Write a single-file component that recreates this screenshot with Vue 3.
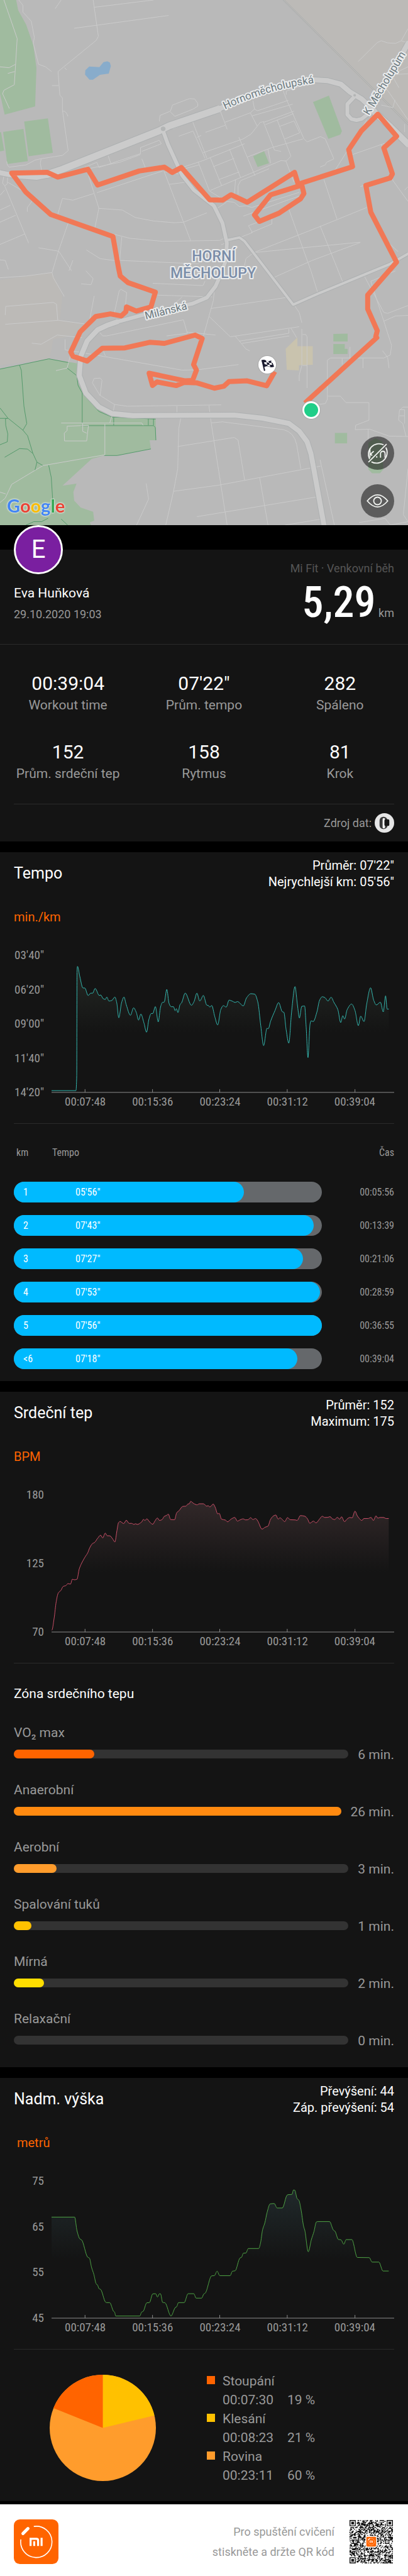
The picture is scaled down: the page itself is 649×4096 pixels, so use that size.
<template>
  <main class="report">
    <!-- Map with the route -->
    <section class="map" aria-label="Mapa trasy">
      <svg class="map-layer" viewBox="0 0 1568 3025" preserveAspectRatio="none" aria-hidden="true">
        <polygon class="block" points="1087,0 1568,0 1568,720 1440,540" />
        <polygon class="block" points="0,1614 200,1569 240,1704 230,1844 320,1869 280,1934 205,1954 190,2069 0,2104" />
        <polygon v-for="p in parks" :key="p" class="park" :points="p" />
        <polygon class="water" points="327,430 328,405 343,383 382,387 398,358 412,353 422,360 426,380 418,424 384,431 357,459 344,459" />
        <polygon class="school" points="1098,2009 1143,1944 1143,1994 1202,1994 1202,2101 1149,2104 1149,2134 1102,2130" />
        <path class="rail" d="M1087,0 L1568,720 M1093,0 L1568,708" />
        <path v-for="d in paths" :key="d" class="footpath" :d="d" />
        <path v-for="d in streets" :key="d" class="street" :d="d" />
        <path v-for="r in roads" :key="'c' + r.d" class="casing" :stroke-width="r.w + 2" :d="r.d" />
        <path v-for="r in roads" :key="r.d" class="road" :stroke-width="r.w" :d="r.d" />
        <ellipse class="island" cx="627" cy="742" rx="9" ry="13" />
        <ellipse class="island" cx="1363" cy="549" rx="5" ry="7" />
        <path class="route" :d="route" />
      </svg>

      <svg class="map-layer" viewBox="0 0 649 835" role="img" aria-label="Horní Měcholupy">
        <path id="street-curve" d="M358 174 Q426 142 500 132 L540 129" />
        <text class="street-name"><textPath href="#street-curve">Hornoměcholupská</textPath></text>
        <text class="street-name" transform="translate(587 184) rotate(-59)">K Měcholupům</text>
        <text class="street-name" transform="translate(232 508) rotate(-14)">Milánská</text>
        <text class="district" x="340" y="415">HORNÍ</text>
        <text class="district" x="339" y="442">MĚCHOLUPY</text>
        <text class="google" x="11" y="815"><tspan fill="#4285f4">G</tspan><tspan fill="#ea4335">o</tspan><tspan fill="#fbbc05">o</tspan><tspan fill="#4285f4">g</tspan><tspan fill="#34a853">l</tspan><tspan fill="#ea4335">e</tspan></text>

        <!-- start / finish -->
        <circle cx="495" cy="652" r="15" fill="#a6a6a6" />
        <circle cx="495" cy="652" r="14" fill="#fff" />
        <circle cx="495" cy="652" r="11" fill="#20ce88" />
        <circle cx="425" cy="580" r="15" fill="#a6a6a6" />
        <circle cx="425" cy="580" r="14" fill="#fff" />
        <g transform="translate(425 580)">
          <path d="M-9 -7 L-8 -8 L-3 9 L-5 10 Z" fill="#1b1b2f" />
          <path d="M-9 -7 Q-6 -9 -2 -7 T7 -7 L11 3 Q7 5 3 3 T-5 4 Z" fill="#1b1b2f" />
          <path d="M-2 -7 L2 -6 L3 -3 L-1 -4 Z M-5 -4 L-1 -4 L0 0 L-4 -1 Z M3 -3 L7 -3 L8 0 L4 0 Z M0 0 L4 0 L5 3 L1 2 Z M6 -7 L8 -6 L9 -3 L7 -3 Z" fill="#fff" />
        </g>
      </svg>

      <div class="map-buttons">
        <button type="button" class="round-btn" :aria-pressed="!showKm" aria-label="Skrýt kilometry" @click="showKm = !showKm">
          <svg viewBox="0 0 88 88" aria-hidden="true">
            <g fill="none" stroke="#f2f4f1" stroke-width="3">
              <path d="M60 22 A28 28 0 0 0 23 60" />
              <path d="M66 29 A28 28 0 0 1 28 67" />
              <path d="M68 20 L20 68" />
              <path d="M24 32 V56 M34 39 L25 47 L30 50" />
              <path d="M52 56 V44 Q54 39 58 39 Q64 39 64 46 V56 M42 52 V56" />
            </g>
          </svg>
        </button>
        <button type="button" class="round-btn" :aria-pressed="!showMap" aria-label="Skrýt mapu" @click="showMap = !showMap">
          <svg viewBox="0 0 88 88" aria-hidden="true">
            <g fill="none" stroke="#f2f4f1" stroke-width="3">
              <path d="M17 44 Q44 12 71 44 Q44 76 17 44 Z" />
              <circle cx="44" cy="44" r="10" />
            </g>
          </svg>
        </button>
      </div>
    </section>

    <!-- Profile and totals -->
    <section class="panel summary">
      <div class="profile">
        <div>
          <div class="avatar">E</div>
          <p class="name">Eva Huňková</p>
          <p class="date">29.10.2020 19:03</p>
        </div>
        <div class="total">
          <p class="source-app">Mi Fit · Venkovní běh</p>
          <p class="distance"><strong>5,29</strong> <span>km</span></p>
        </div>
      </div>
      <dl class="stats">
        <div v-for="s in stats" :key="s.label" class="stat">
          <dd>{{ s.value }}</dd>
          <dt>{{ s.label }}</dt>
        </div>
      </dl>
      <div class="data-source">
        <span>Zdroj dat:</span>
        <svg viewBox="0 0 32 32" aria-hidden="true">
          <circle cx="16" cy="16" r="16" fill="#e6e6e6" />
          <rect x="8" y="6" width="13" height="20" rx="6" fill="#3a3a3a" />
          <rect x="13" y="8" width="4" height="17" rx="2" fill="#f5f5f5" />
          <rect x="16" y="10" width="8" height="11" rx="2" fill="#161616" />
        </svg>
      </div>
    </section>

    <!-- Charts -->
    <section v-for="c in charts" :key="c.id" class="panel">
      <header class="panel-head">
        <h2>{{ c.title }}</h2>
        <p>{{ c.info[0] }}<br />{{ c.info[1] }}</p>
      </header>
      <p class="unit">{{ c.unit }}</p>
      <div class="chart">
        <ul class="y-axis">
          <li v-for="y in c.yLabels" :key="y">{{ y }}</li>
        </ul>
        <svg class="plot" :viewBox="`199 ${c.axis - c.span} 1320 ${c.span}`" preserveAspectRatio="none" aria-hidden="true">
          <defs>
            <linearGradient :id="c.id + '-fill'" gradientUnits="userSpaceOnUse" x1="0" x2="0" :y1="c.top" :y2="c.fade">
              <stop offset="0" :stop-color="c.fill" />
              <stop offset="1" stop-color="#141414" />
            </linearGradient>
          </defs>
          <path :d="`${curve(c.points)} V${c.axis} H${c.points[0][0]} Z`" :fill="`url(#${c.id}-fill)`" />
          <path class="axis" :d="`M199,${c.axis} H1519 ${ticks(c.axis)}`" />
          <path class="line" :d="curve(c.points)" :stroke="c.color" />
        </svg>
        <ul class="x-axis">
          <li v-for="t in times" :key="t">{{ t }}</li>
        </ul>
      </div>

      <table v-if="c.id === 'pace'" class="splits">
        <thead>
          <tr>
            <th scope="col">km</th>
            <th scope="col">Tempo</th>
            <th scope="col">Čas</th>
          </tr>
        </thead>
        <tbody>
          <tr v-for="s in splits" :key="s.km">
            <td>
              <span class="split-bar"><span :style="{ width: s.width + '%' }"></span></span>
              <span class="split-km">{{ s.km }}</span>
            </td>
            <td>{{ s.pace }}</td>
            <td>{{ s.time }}</td>
          </tr>
        </tbody>
      </table>

      <div v-if="c.id === 'heart'" class="zones">
        <h3>Zóna srdečního tepu</h3>
        <div v-for="z in zones" :key="z.name" class="zone">
          <p>{{ z.name }}</p>
          <div class="zone-row">
            <div class="zone-bar"><span :style="{ width: z.width + '%', backgroundColor: z.color }"></span></div>
            <span>{{ z.minutes }} min.</span>
          </div>
        </div>
      </div>

      <div v-if="c.id === 'altitude'" class="slopes">
        <svg class="pie" viewBox="0 0 170 170" aria-hidden="true">
          <circle cx="85" cy="85" r="85" fill="#ff9c2c" />
          <path d="M85 85 V0 A85 85 0 0 1 167.6 65.2 Z" fill="#ffc100" />
          <path d="M85 85 L6.1 53.2 A85 85 0 0 1 85 0 Z" fill="#ff6400" />
        </svg>
        <ul class="legend">
          <li v-for="s in slopes" :key="s.name">
            <i :style="{ backgroundColor: s.color }"></i>
            <div>
              <p>{{ s.name }}</p>
              <p class="slope-values"><span>{{ s.time }}</span><span>{{ s.share }} %</span></p>
            </div>
          </li>
        </ul>
      </div>
    </section>

    <footer class="footer">
      <svg class="logo" viewBox="0 0 357 357" role="img" aria-label="Mi Fit">
        <rect width="357" height="357" rx="48" fill="#ff6400" />
        <path d="M163 56 A125 125 0 1 1 56 163" fill="none" stroke="#fff" stroke-width="8" stroke-linecap="round" />
        <path d="M73 113 L113 73" stroke="#fff" stroke-width="25" stroke-linecap="round" />
        <path d="M126 212 V147 H182 Q202 147 202 167 V212 H186 V170 Q186 163 179 163 H142 V212 Z M155 175 H171 V212 H155 Z M214 147 H230 V212 H214 Z" fill="#fff" />
      </svg>
      <p>Pro spuštění cvičení<br />stiskněte a držte QR kód</p>
      <svg class="qr" viewBox="0 0 49 49" role="img" aria-label="QR kód">
        <path :d="qrPath" fill="#111" />
        <rect x="18" y="18" width="13" height="13" rx="2" fill="#fff" />
        <rect x="19" y="19" width="11" height="11" rx="1" fill="#ff6400" />
        <circle cx="24.5" cy="24.5" r="3.8" fill="none" stroke="#ffd2b0" stroke-width=".4" />
        <path d="M21.2 22.4 L22.6 21" stroke="#fff" stroke-width=".9" stroke-linecap="round" />
        <path d="M23 25.7 V23.5 H25 V25.7 M24 24.5 V25.7 M26 23.2 V25.7" fill="none" stroke="#fff" stroke-width=".6" />
      </svg>
    </footer>
  </main>
</template>

<script setup>
import { ref } from "vue";

const showKm = ref(false);
const showMap = ref(true);

const stats = [
  { value: "00:39:04", label: "Workout time" },
  { value: "07'22\"", label: "Prům. tempo" },
  { value: "282", label: "Spáleno" },
  { value: "152", label: "Prům. srdeční tep" },
  { value: "158", label: "Rytmus" },
  { value: "81", label: "Krok" },
];

const splits = [
  { km: "1", pace: "05'56\"", time: "00:05:56", width: 74.7 },
  { km: "2", pace: "07'43\"", time: "00:13:39", width: 97.3 },
  { km: "3", pace: "07'27\"", time: "00:21:06", width: 93.9 },
  { km: "4", pace: "07'53\"", time: "00:28:59", width: 99.3 },
  { km: "5", pace: "07'56\"", time: "00:36:55", width: 100 },
  { km: "<6", pace: "07'18\"", time: "00:39:04", width: 92.1 },
];

const zones = [
  { name: "VO₂ max", minutes: 6, width: 24.1, color: "#ff6400" },
  { name: "Anaerobní", minutes: 26, width: 100, color: "#ff8a10" },
  { name: "Aerobní", minutes: 3, width: 12.7, color: "#ff9c2c" },
  { name: "Spalování tuků", minutes: 1, width: 5.2, color: "#ffc100" },
  { name: "Mírná", minutes: 2, width: 9, color: "#ffde00" },
  { name: "Relaxační", minutes: 0, width: 0, color: "#ffde00" },
];

const slopes = [
  { name: "Stoupání", time: "00:07:30", share: 19, color: "#ff6400" },
  { name: "Klesání", time: "00:08:23", share: 21, color: "#ffc100" },
  { name: "Rovina", time: "00:23:11", share: 60, color: "#ff9c2c" },
];

const times = ["00:07:48", "00:15:36", "00:23:24", "00:31:12", "00:39:04"];

const charts = [
  {
    id: "pace",
    title: "Tempo",
    info: ["Průměr: 07'22\"", "Nejrychlejší km: 05'56\""],
    unit: "min./km",
    yLabels: ["03'40\"", "06'20\"", "09'00\"", "11'40\"", "14'20\""],
    axis: 1394, span: 768, top: 690, fade: 1060, fill: "#242824", color: "#34b8b0",
    points: [
      [199, 1384], [293, 1384], [296, 1300], [297, 720], [299, 688], [308, 745], [320, 809], [327, 809], [340, 851],
      [350, 838], [357, 838], [367, 812], [383, 851], [388, 848], [398, 869], [406, 873], [412, 860], [420, 882],
      [431, 879], [443, 860], [450, 890], [458, 976], [469, 890], [478, 860], [487, 904], [503, 962], [515, 920],
      [526, 948], [534, 989], [543, 955], [555, 1005], [565, 1057], [574, 985], [583, 952], [589, 952], [599, 913],
      [610, 999], [619, 915], [626, 890], [633, 888], [643, 817], [652, 897], [660, 914], [669, 914], [675, 936],
      [680, 925], [686, 947], [694, 902], [700, 892], [714, 838], [738, 906], [748, 885], [759, 838], [770, 882],
      [784, 851], [797, 905], [803, 907], [809, 916], [816, 907], [828, 970], [839, 1016], [851, 930], [861, 908],
      [872, 916], [883, 877], [894, 882], [907, 890], [915, 885], [938, 909], [950, 865], [967, 841], [982, 844],
      [994, 890], [1005, 1020], [1016, 1132], [1029, 1035], [1034, 1037], [1043, 995], [1060, 935], [1074, 891],
      [1088, 942], [1094, 945], [1103, 1045], [1113, 1118], [1124, 940], [1137, 801], [1146, 900], [1154, 977],
      [1163, 912], [1174, 910], [1180, 1030], [1187, 1199], [1195, 1010], [1199, 993], [1207, 997], [1222, 940],
      [1231, 880], [1242, 858], [1253, 864], [1264, 882], [1276, 861], [1287, 890], [1302, 930], [1313, 1003],
      [1321, 964], [1328, 983], [1338, 930], [1355, 899], [1368, 935], [1381, 1020], [1390, 967], [1403, 997],
      [1413, 900], [1428, 808], [1440, 877], [1450, 904], [1466, 889], [1477, 943], [1486, 853], [1492, 927], [1498, 927],
    ],
  },
  {
    id: "heart",
    title: "Srdeční tep",
    info: ["Průměr: 152", "Maximum: 175"],
    unit: "BPM",
    yLabels: ["180", "125", "70"],
    axis: 1405, span: 790, top: 652, fade: 1060, fill: "#322829", color: "#cc4f68",
    points: [
      [200, 1395], [209, 1325], [217, 1230], [225, 1180], [235, 1165], [244, 1142], [254, 1138], [262, 1126], [272, 1129],
      [279, 1101], [287, 1104], [297, 1101], [306, 1040], [328, 973], [338, 950], [346, 920], [357, 895], [364, 890],
      [377, 864], [388, 847], [396, 863], [406, 835], [413, 850], [424, 851], [435, 870], [443, 886], [451, 820],
      [457, 775], [463, 768], [477, 780], [487, 761], [498, 779], [508, 779], [516, 785], [523, 781], [529, 785],
      [546, 771], [553, 756], [559, 762], [566, 753], [577, 771], [589, 784], [597, 766], [607, 748], [615, 762],
      [625, 757], [633, 739], [642, 733], [649, 726], [658, 757], [673, 758], [681, 718], [690, 706], [705, 681],
      [716, 680], [724, 668], [730, 665], [735, 652], [747, 665], [760, 672], [768, 666], [784, 666], [797, 680],
      [802, 677], [809, 684], [822, 668], [830, 688], [839, 724], [845, 721], [854, 755], [869, 760], [877, 770],
      [890, 755], [905, 745], [915, 766], [925, 759], [937, 753], [947, 759], [956, 758], [966, 746], [975, 757],
      [985, 751], [993, 764], [1010, 812], [1022, 801], [1033, 795], [1042, 758], [1054, 736], [1063, 731],
      [1072, 754], [1079, 747], [1089, 758], [1097, 769], [1108, 746], [1119, 758], [1138, 759], [1145, 762],
      [1158, 734], [1175, 738], [1185, 753], [1194, 778], [1208, 766], [1218, 776], [1231, 755], [1242, 738],
      [1252, 745], [1264, 744], [1272, 740], [1280, 752], [1290, 757], [1300, 744], [1309, 755], [1316, 741],
      [1328, 769], [1337, 755], [1348, 745], [1357, 747], [1368, 709], [1378, 738], [1395, 762], [1402, 751],
      [1418, 751], [1430, 745], [1439, 762], [1449, 736], [1456, 749], [1464, 745], [1478, 745], [1488, 751], [1498, 751],
    ],
  },
  {
    id: "altitude",
    title: "Nadm. výška",
    info: ["Převýšení: 44", "Záp. převýšení: 54"],
    unit: " metrů",
    yLabels: ["75", "65", "55", "45"],
    axis: 1440, span: 768, top: 722, fade: 1110, fill: "#20292b", color: "#4fa545",
    points: [
      [199, 874], [288, 874], [297, 950], [308, 996], [315, 1002], [338, 1098], [345, 1104], [353, 1155], [362, 1195],
      [371, 1248], [376, 1254], [382, 1275], [388, 1279], [407, 1350], [411, 1353], [423, 1353], [438, 1402],
      [442, 1406], [446, 1428], [539, 1428], [546, 1406], [552, 1402], [566, 1354], [576, 1353], [589, 1304],
      [600, 1303], [607, 1322], [615, 1303], [619, 1304], [627, 1352], [636, 1354], [659, 1428], [676, 1380],
      [681, 1376], [688, 1353], [710, 1353], [725, 1303], [747, 1303], [756, 1328], [777, 1328], [786, 1304],
      [791, 1300], [816, 1203], [826, 1202], [837, 1177], [847, 1202], [887, 1202], [896, 1177], [906, 1175],
      [925, 1103], [931, 1099], [938, 1076], [948, 1075], [957, 1050], [997, 1050], [1004, 1020], [1012, 945],
      [1021, 905], [1029, 850], [1041, 800], [1057, 798], [1068, 823], [1088, 823], [1107, 750], [1112, 748],
      [1125, 747], [1131, 722], [1136, 723], [1145, 770], [1152, 780], [1160, 830], [1170, 925], [1175, 950],
      [1188, 1068], [1200, 1000], [1210, 955], [1219, 902], [1224, 899], [1270, 899], [1285, 947], [1291, 953],
      [1304, 999], [1314, 1001], [1325, 1026], [1334, 1000], [1356, 1000], [1377, 1100], [1423, 1101],
      [1434, 1126], [1460, 1126], [1476, 1176], [1498, 1176],
    ],
  },
];

// Monotone cubic line through the samples
const curve = (pts) => {
  const slope = (a, b) => (b[1] - a[1]) / (b[0] - a[0]);
  const tangents = pts.map((p, i) => {
    if (i === 0 || i === pts.length - 1) return 0;
    const a = slope(pts[i - 1], p);
    const b = slope(p, pts[i + 1]);
    return a * b <= 0 ? 0 : (2 * a * b) / (a + b);
  });
  let d = `M${pts[0][0]},${pts[0][1]}`;
  for (let i = 1; i < pts.length; i++) {
    const [x0, y0] = pts[i - 1];
    const [x1, y1] = pts[i];
    const h = (x1 - x0) / 3;
    d += ` C${x0 + h},${y0 + tangents[i - 1] * h} ${x1 - h},${y1 - tangents[i] * h} ${x1},${y1}`;
  }
  return d;
};

const ticks = (axis) => [328, 588, 847, 1107, 1368].map((x) => `M${x},${axis} v-18`).join(" ");

// Map shapes
const parks = [
  "0,0 62,0 70,60 100,140 128,260 140,390 135,613 18,660 0,540",
  "93,700 184,682 203,880 110,900",
  "12,760 90,743 107,928 28,945",
  "0,762 4,762 16,868 0,872",
  "1203,588 1264,551 1314,755 1308,775 1262,800",
  "973,900 1015,870 1034,940 990,962",
  "0,2124 75,2102 188,2067 300,2094 300,2204 320,2264 370,2344 430,2394 598,2406 600,2536 575,2536 580,2586 450,2624 400,2624 352,2644 240,2798 294,2786 282,2834 285,2884 310,2924 358,2948 362,2999 345,3010 350,3025 0,3025",
  "1281,1924 1336,1922 1336,1967 1281,1967",
  "1281,1982 1325,1982 1325,2010 1336,2010 1336,2039 1281,2040",
  "1287,2494 1334,2494 1334,2554 1287,2554",
  "1416,2549 1443,2524 1470,2544 1473,2704 1460,2726 1430,2726 1416,2704",
];

const paths = [
  "M0,2126 L75,2103 L188,2067 L265,2089",
  "M75,2103 L82,2134 L92,2340 L103,2440 L88,2478",
  "M0,2350 L30,2408 L88,2478 L106,2510 L126,2610 L142,2662 L134,2710",
  "M0,2410 H30 L21,2412 L22,2450 L30,2500 L28,2545 L0,2562",
  "M18,2634 L75,2584 L106,2587 L126,2612",
  "M142,2662 L165,2682 M187,2680 L197,2750 L203,2890",
  "M258,2120 L295,2164 L300,2220 L316,2264 V2436",
  "M316,2264 L380,2370 L430,2402 L598,2414",
  "M310,2452 H590 L597,2462 L599,2536 M437,2394 V2450 M570,2408 V2450 M590,2410 V2450",
  "M400,2624 H450 L580,2586 M100,3025 L130,3005 H160 L185,2985 M235,2990 L260,3025",
];

const streets = [
  "M15,0 L66,222 L60,370 L35,390 L0,385 M60,370 L55,488 L15,520 L10,540 L36,625 M30,423 L57,412",
  "M72,0 L88,30 V70 L120,122 L132,215 L128,250 L148,370 L175,385 L198,412",
  "M235,0 L212,50 M358,0 L378,208 L370,232 L335,275 L223,412 L230,548 L240,565 V635 L262,868 L240,895 L155,915 L135,922 L100,950 L35,963 L28,950 L26,930",
  "M362,42 L590,0 M285,163 L648,89 M200,493 H225 M242,640 Q255,640 261,670 M248,390 L256,402",
  "M158,915 L155,940 L160,985 M1568,165 L1542,235 L1520,250 L1490,247 L1465,235 L1450,245 L1376,355",
  "M1542,235 L1568,248 M1568,385 L1505,430 L1568,425 M1505,430 L1533,505 M1480,500 L1568,690 M1518,575 L1510,620 L1465,605",
  "M612,700 L615,665 L655,640 L663,605 L728,568 L748,570 L760,595 V612 L740,630 L672,670 L655,645",
  "M665,742 L845,632 L873,745 M740,700 L795,910 M790,762 L865,722 M865,704 L962,650 L988,725 M962,650 L978,628 L972,580",
  "M687,785 L742,755 L788,912 M757,792 L773,780 M978,628 L990,638 L1108,578 M968,668 L1125,600",
  "M1085,510 L1100,570 L1168,800 L1180,817 L1232,787 L1250,800 L1283,915 L1255,935 L1250,950 L1230,962 M1100,545 V525 L1200,472",
  "M1013,705 L1130,640 M1020,718 L1128,655 M1013,705 L1055,865 L1080,872 M1065,690 L1118,900 L1100,928 L1080,925 L808,1097",
  "M1075,728 L1130,697 L1152,765 L1095,800 M780,880 L935,800 L965,772 L1000,705 L1015,700 M918,790 L950,905 L1045,850 L1165,800",
  "M695,967 L780,925 L940,828 M882,860 L925,1025 M950,905 L980,1012 M808,908 L852,1070 M820,960 L900,912 M840,1035 L920,990",
  "M762,935 L805,1100 L870,1160 L900,1165 L920,1190 L945,1185 L968,1195 L1150,1108 M703,975 L765,950",
  "M905,1035 L900,1140 M1034,972 L955,1022 L925,1040 L915,1070 V1120 M1030,860 L1040,940 M1098,925 L1130,1050",
  "M325,965 L372,935 L380,965 L540,885 V850 L612,808 L620,828 L545,872 M415,895 L427,945 M340,972 L460,935 L540,890",
  "M545,915 L565,990 M372,1110 L625,985 M360,1115 L280,1153 L240,1143 L222,1235 M340,1010 L380,1200 L365,1310",
  "M378,1200 L470,1210 L520,1253 L590,1273 L670,1283 L705,1280 L795,1226 M630,985 L733,1388 M650,1062 L712,1050",
  "M635,990 L700,1005 M400,1335 L500,1373 L625,1390 L845,1385 L870,1365 M468,1365 L460,1500 L765,1520",
  "M15,1012 L10,1055 L18,1070 L28,1060 L30,1012 M30,1050 L105,1115 M18,1070 L110,1400 M0,1125 L18,1095 M0,1210 L40,1182 M0,1280 L60,1240 M0,1408 L95,1348",
  "M125,1155 L105,1195 V1220 M262,1285 L225,1445 L275,1560 M148,1427 L225,1447 M332,1440 L385,1490 L450,1503 M280,1500 L265,1560 M0,1497 L20,1500 L32,1552",
  "M225,1445 L200,1570 L100,1590 L0,1600 M200,1570 L205,1600 L247,1708 M330,1560 L358,1605 L350,1640 L312,1635",
  "M835,1200 L870,1165 M850,1410 L970,1340 L955,1300 L1045,1250 V1290 L965,1340 M935,1245 L1110,1150 L1170,1120",
  "M1165,1065 L1245,1020 L1290,975 L1410,690 M1245,1035 L1295,1262 M1110,1205 L1195,1560 L1222,1690 M1230,1300 L1320,1635",
  "M1385,1395 L975,1455 L1230,1305 L1410,1195 M975,1455 L945,1490 L940,1530 M1355,890 L1480,825 M1465,830 L1510,1040 L1568,1160",
  "M1530,1450 L1480,1380 M1385,1075 L1415,1060 M1050,1600 L1200,1500 L1385,1397 M1568,1075 L1555,1095 M1555,715 V760",
  "M20,1868 L225,1845 L325,1866 M20,1815 L22,1765 L205,1742 L217,1752 L222,1845 M362,1705 L345,1840 M440,1800 L458,1675 L465,1667 L487,1685 L480,1790",
  "M380,1910 L395,1935 L410,1935 L705,1842 M587,1632 L780,1645 L788,1620 M605,1700 L815,1710 M700,1710 L665,1760 M825,1655 L820,1730 L782,1935",
  "M810,1777 L1105,1713 M705,1842 L720,1920 L640,1935 M720,1913 L828,1930 M803,1822 L885,1940 L1150,1882 M905,1938 L945,2010 L960,2022 M920,1965 L1110,1920 V1895 M930,1978 L1112,1935",
  "M250,1955 V2015 L310,2030 L700,2132 L760,2130 L917,2100 M270,2050 L258,2120 L215,2135 M122,1977 L158,1983 L220,1930 L315,1945 M405,2050 L398,2025",
  "M440,2330 L435,2374 L422,2435 M385,2280 L355,2205 L362,2180 L385,2178 L392,2190 L385,2278 L440,2330 L490,2340 L850,2332 M680,2340 V2380 M803,2335 L812,2440 L873,3025",
  "M695,2405 L687,2470 L683,2700 L667,2830 L637,3025 M683,2572 L900,2520 L915,2535 L940,2765 M812,2436 L855,2430 L1090,2475 Q1130,2490 1140,2560 L1156,2700",
  "M667,2830 L840,2795 L1232,2685 M757,2976 L1220,2862 M998,2752 L1030,3025 M1230,2648 L1285,3025 M1095,3025 L1235,2990 M562,2785 L571,2875 L525,3025",
  "M235,2437 H545 L550,2450 M403,2442 V2620 L165,2682 L45,2790 L20,2870 L0,2895 M0,2835 L22,2845 M258,2455 L340,2450 L333,2540 H248 L247,2495 L258,2480 Z M318,2440 V2485 L333,2495",
  "M1118,1890 L1140,1945 M1127,1750 L1150,1800 L1160,1860 M1160,1895 V2105 M1163,1927 H1175 L1180,1940 V2235 M1163,2105 H1180 M1160,2105 L1150,2160 V2195",
  "M1258,2270 V2075 L1270,2062 H1475 L1500,2045 L1505,1990 L1475,1850 L1425,1620 L1520,1560 M1400,1590 L1475,1800 L1490,1805 L1568,1760 M1475,1850 L1520,1820 L1568,1817",
  "M1345,1998 V2075 M1395,2065 V2120 M1470,2020 L1490,2060 L1495,2120 M1315,2065 V2100 M1260,2282 H1308 L1330,2319 H1418 V2420 L1367,2450 L1365,2475 L1420,2472 L1495,2512 L1568,2514",
  "M1568,2345 H1548 L1535,2365 L1532,2420 L1548,2440 L1560,2512 M1535,2360 H1555 V2440 M1535,2395 H1555 M1220,2330 L1250,2325 L1258,2300 V2270 M1415,2475 V2540 M1380,3010 L1480,2986 L1500,3025 L1568,3005 L1550,2965 L1568,2700",
];

const roads = [
  { w: 4, d: "M872,1384 L920,1368 L940,1390 L1127,1755 L1225,1690 L1500,1520 L1568,1462" },
  { w: 6, d: "M1360,560 L1335,600 L1335,660 L1350,685 L1370,692 L1390,685 L1420,650" },
  { w: 8, d: "M1568,250 L1420,650" },
  { w: 6, d: "M627,755 L645,830 L700,1010 L745,1095 L822,1185 L855,1285 L872,1400 L868,1500 L850,1575 L828,1650 L795,1714 L740,1749 L600,1794 L450,1854" },
  { w: 8, d: "M450,1854 L410,1875 L375,1900 L335,1964 L310,2054 L305,2164 L330,2264 L380,2344 L430,2382 L510,2394 L900,2391 L1010,2409 L1110,2439 L1150,2484 L1180,2544 L1195,2614 L1205,2694 L1245,3025" },
  { w: 8, d: "M0,995 L60,1013 L140,1022 L200,1005" },
  { w: 11, d: "M180,1005 L240,975 L610,755 L627,742 L650,725 L840,628" },
  { w: 8, d: "M840,628 L1060,505 L1190,458 L1260,465 L1310,485 L1345,530 L1390,570 L1440,640" },
  { w: 10, d: "M1420,620 L1500,730 L1568,830" },
];

const route =
  "M1172,2322 L1448,1945 L1444,1940 L1450,1905 L1413,1780 V1700 L1524,1510 L1425,1222 L1406,1068 L1500,1025 L1508,1002 L1475,852 L1524,785 L1452,658 L1388,755 L1340,862 L1355,960 L1158,1055 " +
  "L1168,1115 L1155,1145 L1072,1228 L997,1275 L978,1238 L1040,1122 L1148,1072 L1132,993 L950,1165 L888,1122 L855,1153 L806,1151 L697,965 L662,993 L632,963 L535,985 L375,1066 L338,975 L222,1020 L182,993 L45,997 " +
  "L100,1108 L195,1235 L434,1362 L455,1540 L462,1590 L492,1628 L597,1683 L580,1768 L524,1792 L486,1768 L484,1795 L466,1820 L424,1808 L368,1823 L308,1912 L272,2028 L280,2052 L335,2080 L393,2006 L480,2004 L575,1972 L632,1978 L750,1930 L777,1950 " +
  "L744,2100 L755,2132 L740,2192 L712,2194 L573,2150 L586,2220 L603,2200 L678,2221 L708,2203 L755,2205 L824,2236 L860,2225 L880,2198 L950,2194 L1025,2222 L1056,2140";

// QR modules: finder and alignment marks, the rest is filled by a fixed sequence
const makeQr = () => {
  const size = 49;
  const rings = [
    [3, 3, 3], [45, 3, 3], [3, 45, 3],
    [24, 6, 2], [6, 24, 2], [42, 24, 2], [24, 42, 2], [42, 42, 2],
  ];
  let seed = 20201029;
  let d = "";
  for (let y = 0; y < size; y++) {
    for (let x = 0; x < size; x++) {
      seed = (seed * 1103515245 + 12345) % 2147483648;
      let dark = (seed >> 16) % 2 === 1;
      for (const [cx, cy, r] of rings) {
        const dist = Math.max(Math.abs(x - cx), Math.abs(y - cy));
        if (dist <= r) dark = dist === r || dist <= r - 2;
        else if (r === 3 && dist === 4) dark = false;
      }
      if (dark) d += `M${x} ${y}h1v1h-1z`;
    }
  }
  return d;
};
const qrPath = makeQr();
</script>

<style>
body {
  margin: 0;
  background: #000;
}
</style>

<style scoped>
.report {
  background: #000;
  color: #fff;
  font-family: Roboto, sans-serif;
  font-size: 21px;
  line-height: 26px;
}

p,
h2,
h3,
ul,
dl,
dd {
  margin: 0;
  padding: 0;
  font-weight: 400;
  list-style: none;
}

/* map */
.map {
  position: relative;
  aspect-ratio: 649 / 835;
  background: #b9b9b9;
  overflow: hidden;
}

.map-layer {
  position: absolute;
  inset: 0;
  width: 100%;
  height: 100%;
}

.map-layer > path {
  fill: none;
  stroke-linejoin: round;
  vector-effect: non-scaling-stroke;
}

.block {
  fill: #bcbab7;
}

.park {
  fill: #a0bb9f;
}

.water {
  fill: #88accb;
}

.school {
  fill: #c9c3ae;
}

.rail {
  stroke: #a9adae;
  stroke-width: 1px;
}

.footpath {
  stroke: #559a6c;
  stroke-width: 1px;
}

.street {
  stroke: #cbcbcb;
  stroke-width: 1px;
}

.casing {
  stroke: #adb0b1;
}

.road {
  stroke: #cbcbcb;
  stroke-linecap: round;
}

.island {
  fill: #b3b5b5;
}

.route {
  stroke: #f17856;
  stroke-width: 8px;
}

.street-name,
.district {
  paint-order: stroke;
  stroke: #e9ebec;
  stroke-width: 4px;
  stroke-linejoin: round;
}

.street-name {
  fill: #6d7a80;
  font-size: 17px;
}

.district {
  fill: #7b8da8;
  font-size: 23px;
  font-weight: 500;
  text-anchor: middle;
}

.google {
  font-family: Lato, sans-serif;
  font-size: 29px;
  font-weight: 700;
  filter: drop-shadow(0 0 1px #e4ece4) drop-shadow(0 0 1px #e4ece4);
}

.map-buttons {
  position: absolute;
  right: 22px;
  bottom: 12px;
  display: grid;
  gap: 23px;
}

.round-btn {
  width: 53px;
  height: 53px;
  padding: 0;
  border: 0;
  border-radius: 50%;
  background: rgba(0, 0, 0, 0.5);
  cursor: pointer;
}

.round-btn svg {
  display: block;
  width: 100%;
}

/* panels */
.panel {
  margin-bottom: 17px;
  padding: 8px 22px 19px;
  background: #141414;
}

.summary {
  margin-top: 39px;
  padding: 0;
}

.profile {
  display: flex;
  justify-content: space-between;
  align-items: flex-end;
  padding: 0 22px 34px;
  border-bottom: 1px solid #2a2a2a;
}

.avatar {
  box-sizing: border-box;
  width: 78px;
  height: 78px;
  margin: -39px 0 17px;
  border: 3px solid #fff;
  border-radius: 50%;
  background: #7a1fa0;
  font-size: 40px;
  line-height: 72px;
  text-align: center;
}

.date {
  margin-top: 8px;
  color: #999;
  font-size: 18px;
}

.total {
  text-align: right;
  font-size: 18px;
}

.source-app {
  color: #555;
}

.distance {
  margin-top: 9px;
  color: #999;
}

.distance strong {
  color: #fff;
  font-family: "Roboto Condensed", "Liberation Sans Narrow", Roboto, sans-serif;
  font-size: 68px;
  font-weight: 500;
  line-height: 64px;
}

.stats {
  display: grid;
  grid-template-columns: repeat(3, 1fr);
  gap: 43px 0;
  padding: 44px 0 34px;
  text-align: center;
}

.stat {
  display: grid;
  gap: 2px;
}

.stat dd {
  font-size: 30px;
  line-height: 36px;
}

.stat dt {
  color: #999;
  line-height: 28px;
}

.data-source {
  display: flex;
  justify-content: flex-end;
  align-items: center;
  gap: 5px;
  margin: 0 22px;
  padding: 14px 0;
  border-top: 1px solid #2a2a2a;
  color: #999;
  font-size: 18px;
}

.data-source svg {
  width: 31px;
}

.panel-head {
  display: flex;
  justify-content: space-between;
  align-items: center;
}

.panel-head h2 {
  font-size: 25px;
}

.panel-head p {
  font-size: 20px;
  text-align: right;
}

.unit {
  margin: 30px 0 38px;
  color: #ff6400;
  font-size: 20px;
  white-space: pre;
}

/* charts */
.chart {
  display: grid;
  grid-template-columns: 48px 1fr;
  column-gap: 12px;
  padding-bottom: 24px;
  border-bottom: 1px solid #2a2a2a;
  color: #999;
  font-family: "Roboto Condensed", "Liberation Sans Narrow", Roboto, sans-serif;
  font-size: 19px;
  line-height: 20px;
}

.y-axis {
  display: flex;
  flex-direction: column;
  justify-content: space-between;
  height: 238px;
  text-align: right;
}

.plot {
  width: 100%;
  height: 218px;
  padding-top: 10px;
  overflow: visible;
}

.plot path {
  vector-effect: non-scaling-stroke;
}

.axis {
  fill: none;
  stroke: #8c8c8c;
  stroke-width: 1px;
}

.line {
  fill: none;
  stroke-width: 1px;
}

.x-axis {
  grid-column: 2;
  display: grid;
  grid-template-columns: repeat(5, 1fr);
  margin-top: -5px;
  padding-right: 9px;
  text-align: center;
}

/* splits */
.splits {
  display: grid;
  padding-top: 36px;
  color: #999;
  font-family: "Roboto Condensed", "Liberation Sans Narrow", Roboto, sans-serif;
  font-size: 16px;
  line-height: 20px;
}

.splits tr {
  position: relative;
  display: grid;
  grid-template-columns: 98px 1fr 1fr;
  align-items: center;
}

.splits th,
.splits td {
  padding: 0;
  font-weight: 400;
  text-align: left;
}

.splits th:first-child {
  padding-left: 4px;
}

.splits thead tr {
  grid-template-columns: 61px 1fr 1fr;
}

.splits th:last-child,
.splits td:last-child {
  text-align: right;
}

.splits tbody {
  display: grid;
  gap: 20px;
  padding-top: 36px;
}

.splits tbody tr {
  height: 33px;
}

.splits td:nth-child(-n + 2) {
  color: #fff;
}

.split-km,
.splits td:nth-child(2) {
  position: relative;
}

.split-km {
  padding-left: 15px;
}

.split-bar {
  position: absolute;
  top: 0;
  bottom: 0;
  left: 0;
  width: 81%;
  border-radius: 17px;
  background: #65686b;
}

.split-bar span {
  display: block;
  height: 100%;
  border-radius: 17px;
  background: #00baff;
}

/* heart rate zones */
.zones h3 {
  padding: 35px 0 36px;
  font-size: 21px;
}

.zone {
  display: grid;
  gap: 9px;
  margin-bottom: 30px;
  color: #999;
}

.zone:last-child {
  margin-bottom: 10px;
}

.zone-row {
  display: flex;
  align-items: center;
  gap: 15px;
}

.zone-bar {
  flex: 1;
  height: 14px;
  margin-bottom: 3px;
  border-radius: 7px;
  background: #333;
}

.zone-bar span {
  display: block;
  height: 100%;
  border-radius: 7px;
}

/* slopes */
.slopes {
  display: grid;
  grid-template-columns: 307px 1fr;
  align-items: start;
  padding: 35px 0 7px;
  color: #999;
}

.pie {
  width: 169px;
  margin: 5px 0 0 57px;
}

.legend li {
  display: flex;
  gap: 12px;
}

.legend i {
  width: 13px;
  height: 13px;
  margin-top: 7px;
}

.legend p {
  line-height: 30px;
}

.slope-values {
  display: flex;
  gap: 22px;
}

/* footer */
.footer {
  display: flex;
  align-items: center;
  gap: 24px;
  margin-top: -12px;
  padding: 24px 24px 19px 22px;
  background: #fff;
}

.footer p {
  flex: 1;
  color: #999;
  font-size: 18px;
  line-height: 32px;
  text-align: right;
}

.logo {
  width: 71px;
}

.qr {
  width: 69px;
}
</style>
